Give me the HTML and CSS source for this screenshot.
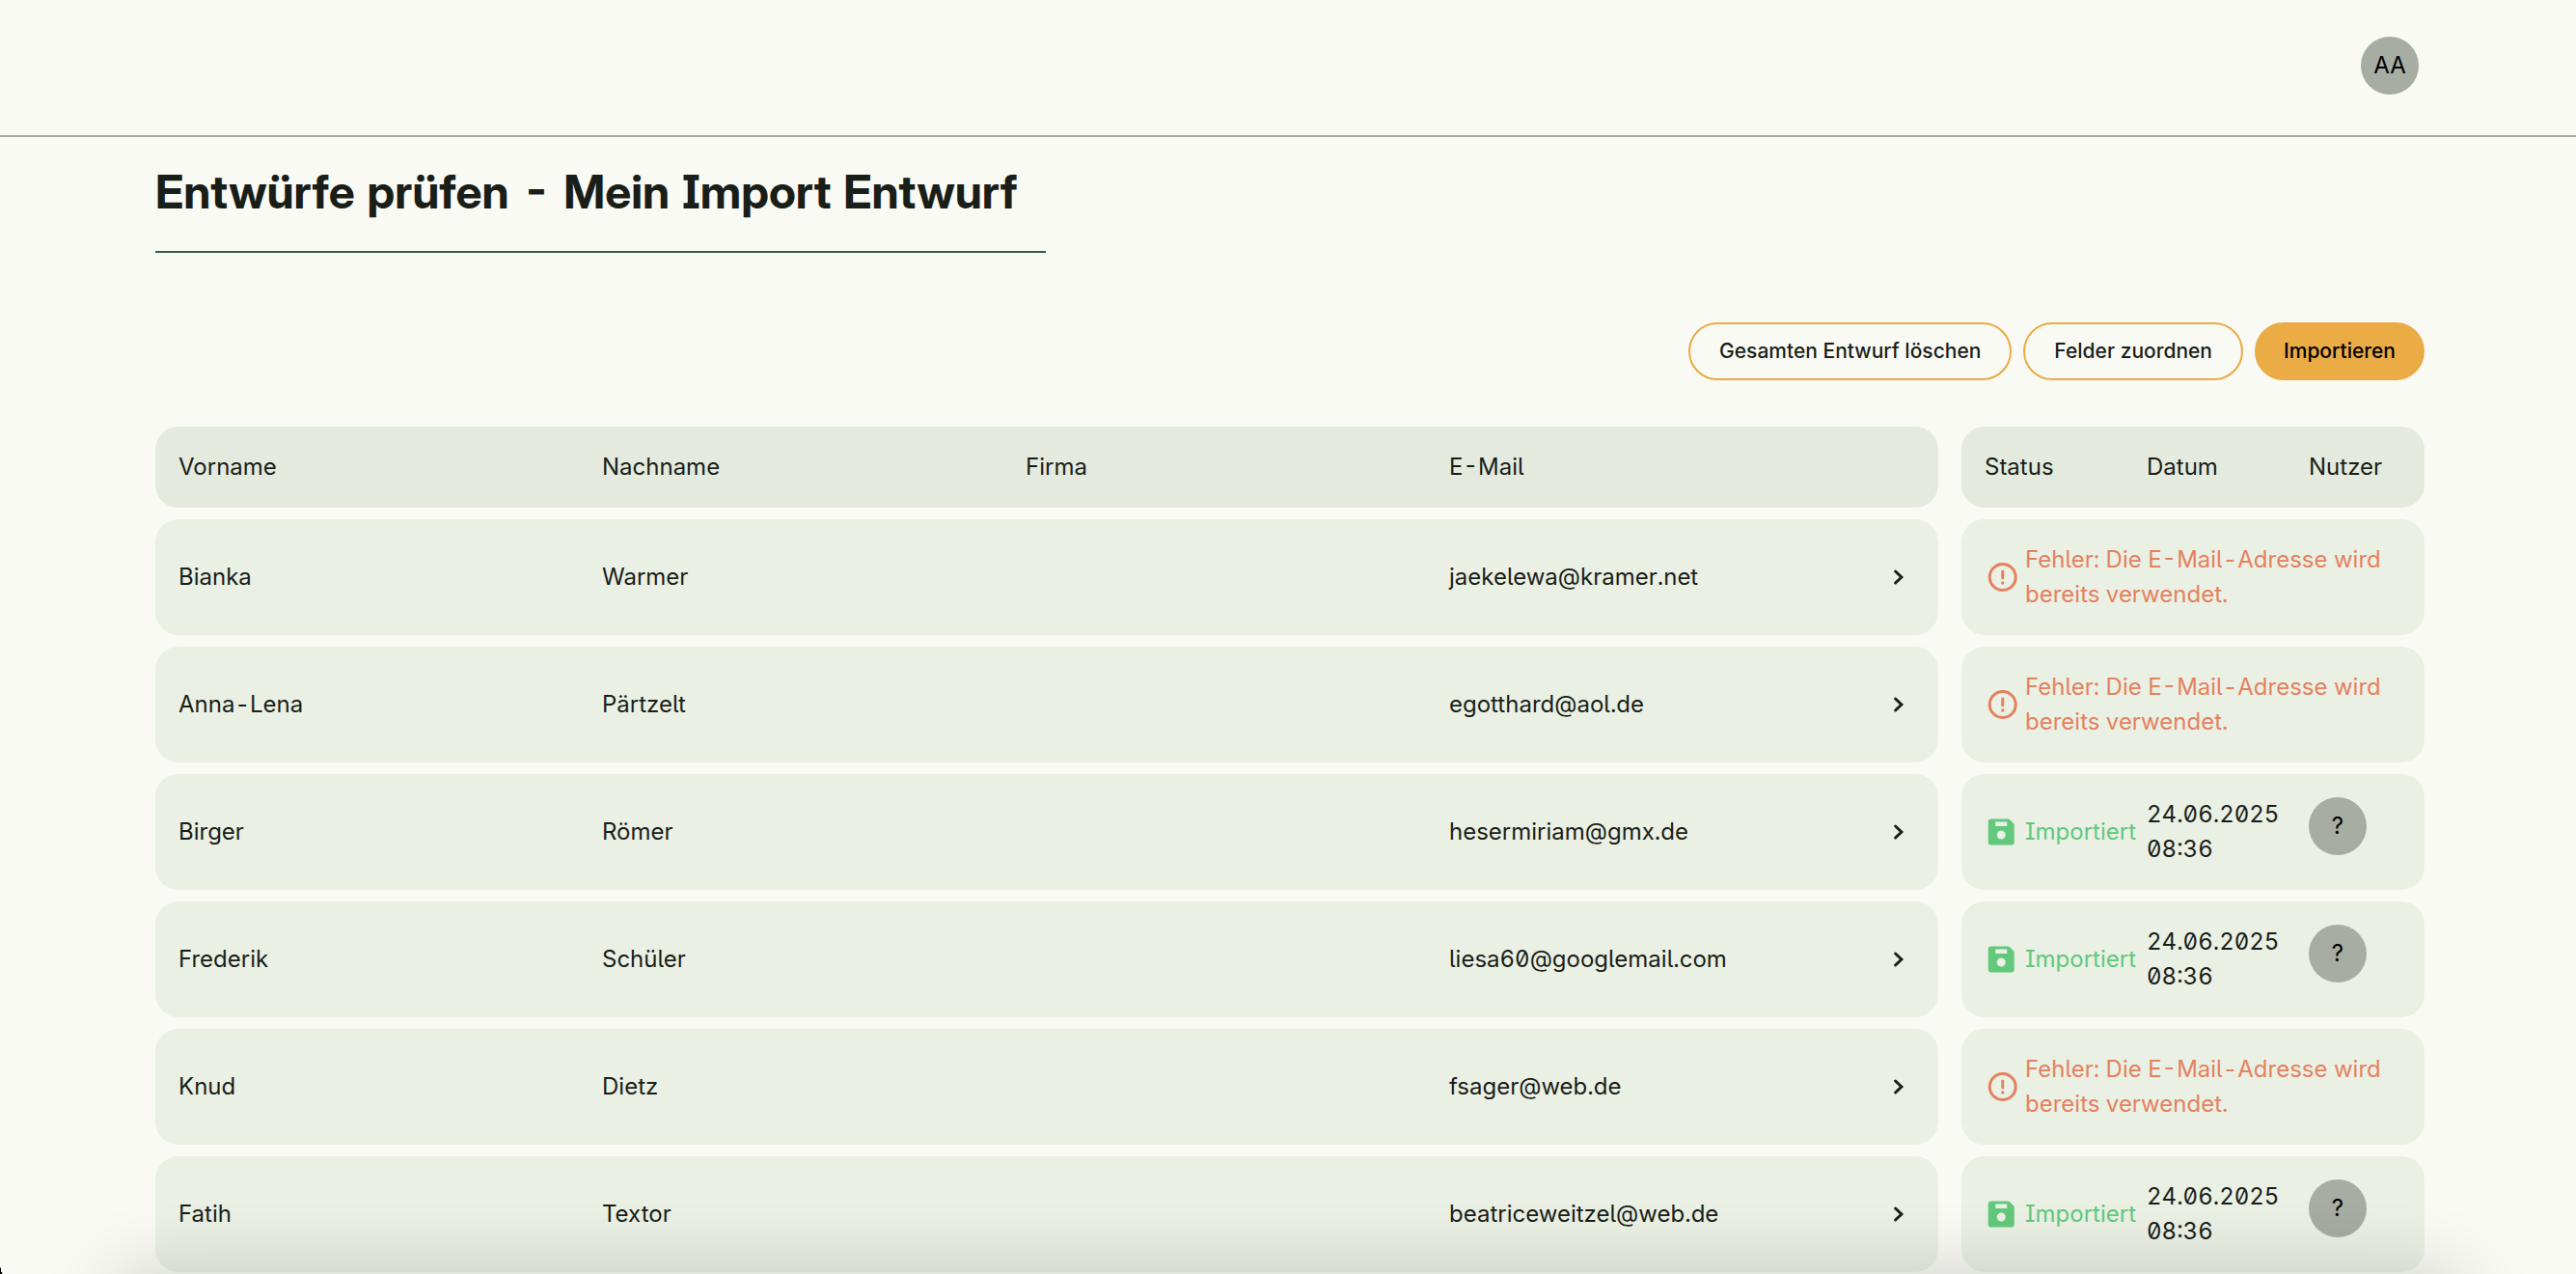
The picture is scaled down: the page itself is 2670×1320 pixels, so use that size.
FILE: index.html
```html
<!DOCTYPE html>
<html lang="de">
<head>
<meta charset="utf-8">
<meta name="viewport" content="width=device-width, initial-scale=1">
<title>Entwürfe prüfen - Mein Import Entwurf</title>
<link rel="stylesheet" href="styles.css">
</head>
<body>
<svg class="sprite" aria-hidden="true">
  <symbol id="chevron" viewBox="0 0 24 24"><path d="M10.400 8l4.200 4-4.200 4" fill="none" stroke="currentColor" stroke-width="2" stroke-linecap="round"/></symbol>
  <symbol id="alert" viewBox="0 0 24 24"><circle cx="12.500" cy="12" r="9" fill="none" stroke="currentColor" stroke-width="2"/><path d="M12.500 8v4.500" fill="none" stroke="currentColor" stroke-width="2" stroke-linecap="round"/><circle cx="12.500" cy="16" r="1.100" fill="currentColor"/></symbol>
  <symbol id="save" viewBox="0 0 24 24"><path transform="translate(-.5 0)" fill="currentColor" fill-rule="evenodd" d="M5 3h11.600a2 2 0 0 1 1.400.6l2.400 2.400a2 2 0 0 1 .6 1.400V19a2 2 0 0 1-2 2H5a2 2 0 0 1-2-2V5a2 2 0 0 1 2-2ZM8 5v3h8V5ZM12 11a3 3 0 1 0 0 6 3 3 0 0 0 0-6Z"/></symbol>
</svg>
<header class="topbar"><button class="avatar" type="button">AA</button></header>
<main class="page">
  <h1 class="title">Entwürfe prüfen - Mein Import Entwurf</h1>
  <div class="actions">
    <button class="btn" type="button">Gesamten Entwurf löschen</button>
    <button class="btn" type="button">Felder zuordnen</button>
    <button class="btn btn-primary" type="button">Importieren</button>
  </div>
  <table class="drafts">
    <thead>
      <tr class="row row-head"><th>Vorname</th><th>Nachname</th><th>Firma</th><th>E-Mail</th><th class="open"></th><th class="status">Status</th><th class="date">Datum</th><th class="user">Nutzer</th></tr>
    </thead>
    <tbody>
      <tr class="row"><td>Bianka</td><td>Warmer</td><td></td><td>jaekelewa@kramer.net</td><td class="open"><svg class="icon"><use href="#chevron"/></svg></td><td class="status error" colspan="3"><div class="state"><svg class="icon"><use href="#alert"/></svg><span>Fehler: Die E-Mail-Adresse wird bereits verwendet.</span></div></td></tr>
      <tr class="row"><td>Anna-Lena</td><td>Pärtzelt</td><td></td><td>egotthard@aol.de</td><td class="open"><svg class="icon"><use href="#chevron"/></svg></td><td class="status error" colspan="3"><div class="state"><svg class="icon"><use href="#alert"/></svg><span>Fehler: Die E-Mail-Adresse wird bereits verwendet.</span></div></td></tr>
      <tr class="row"><td>Birger</td><td>Römer</td><td></td><td>hesermiriam@gmx.de</td><td class="open"><svg class="icon"><use href="#chevron"/></svg></td><td class="status done"><div class="state"><svg class="icon"><use href="#save"/></svg><span>Importiert</span></div></td><td class="date">24.06.2025<br>08:36</td><td class="user"><span class="avatar">?</span></td></tr>
      <tr class="row"><td>Frederik</td><td>Schüler</td><td></td><td>liesa60@googlemail.com</td><td class="open"><svg class="icon"><use href="#chevron"/></svg></td><td class="status done"><div class="state"><svg class="icon"><use href="#save"/></svg><span>Importiert</span></div></td><td class="date">24.06.2025<br>08:36</td><td class="user"><span class="avatar">?</span></td></tr>
      <tr class="row"><td>Knud</td><td>Dietz</td><td></td><td>fsager@web.de</td><td class="open"><svg class="icon"><use href="#chevron"/></svg></td><td class="status error" colspan="3"><div class="state"><svg class="icon"><use href="#alert"/></svg><span>Fehler: Die E-Mail-Adresse wird bereits verwendet.</span></div></td></tr>
      <tr class="row"><td>Fatih</td><td>Textor</td><td></td><td>beatriceweitzel@web.de</td><td class="open"><svg class="icon"><use href="#chevron"/></svg></td><td class="status done"><div class="state"><svg class="icon"><use href="#save"/></svg><span>Importiert</span></div></td><td class="date">24.06.2025<br>08:36</td><td class="user"><span class="avatar">?</span></td></tr>
    </tbody>
  </table>
</main>
<div class="bottom-shade"></div>
<div class="corner"></div>
</body>
</html>
```

FILE: styles.css
```css
*, *::before, *::after { box-sizing: border-box; }

body {
  margin: 0;
  background: #f9faf4;
  color: #1a1e19;
  font: 400 24px/36px Inter, "Liberation Sans", sans-serif;
  font-feature-settings: "ss02", "zero", "tnum";
}

.sprite { position: absolute; width: 0; height: 0; }

.topbar {
  display: flex;
  justify-content: flex-end;
  padding: 38px 163px 42px;
  border-bottom: 2px solid #a7ada3;
}

.avatar {
  display: flex;
  align-items: center;
  justify-content: center;
  width: 60px;
  height: 60px;
  padding: 0;
  border: 0;
  border-radius: 50%;
  background: #a7ada3;
  color: #000;
  font: inherit;
  font-feature-settings: inherit;
}

.page { padding: 24px 157px 2px 161px; }

.title {
  width: fit-content;
  margin: 0;
  padding: 0 30px 28px 0;
  border-bottom: 2px solid #2f5d45;
  font-family: "Inter Display", Inter, "Liberation Sans", sans-serif;
  font-size: 48px;
  font-weight: 700;
  line-height: 66px;
}

.actions {
  display: flex;
  justify-content: flex-end;
  gap: 12px;
  margin: 72px 0 48px;
}

.btn {
  height: 60px;
  padding: 0 30px;
  border: 2px solid #ebab45;
  border-radius: 30px;
  background: transparent;
  color: #1a1e19;
  font: 500 21px/36px Inter, "Liberation Sans", sans-serif;
}

.btn-primary { padding: 0 28px; background: #ebab45; color: #000; }

.drafts { display: block; }

.drafts thead, .drafts tbody {
  display: flex;
  flex-direction: column;
  gap: 12px;
}

.drafts thead { margin-bottom: 12px; }

.row {
  display: grid;
  grid-template-columns: repeat(4, minmax(0, 1fr)) 92px 24px 168px 168px 144px;
  align-items: center;
  min-height: 120px;
}

.row-head { min-height: 84px; }

/* The two panels behind the cells of a row */
.row::before, .row::after {
  content: "";
  grid-row: 1;
  align-self: stretch;
  border-radius: 24px;
  background: #eaf0e4;
}

.row::before { grid-column: 1 / 6; }
.row::after { grid-column: 7 / 10; }
.row-head::before, .row-head::after { background: #e4eade; }

.row th, .row td {
  z-index: 1;
  grid-row: 1;
  padding: 0 0 0 24px;
  font-weight: 400;
  text-align: left;
}

.row > :nth-child(1) { grid-column: 1; }
.row > :nth-child(2) { grid-column: 2; }
.row > :nth-child(3) { grid-column: 3; }
.row > :nth-child(4) { grid-column: 4; }
.row .open { grid-column: 5; justify-self: end; padding: 0 24px 0 0; }
.row .status { grid-column: 7; }
.row .error { grid-column: 7 / 10; padding-right: 24px; color: #e5815f; }
.row .done { color: #62c87b; white-space: nowrap; }
.row .date { grid-column: 8; }
.row .user { grid-column: 9; }
.row td.user { align-self: start; padding-top: 24px; }

.state { display: flex; align-items: center; gap: 6px; }

.icon { display: block; flex: none; width: 36px; height: 36px; }

.bottom-shade {
  position: fixed;
  right: 130px;
  bottom: -40px;
  left: 130px;
  z-index: 2;
  height: 20px;
  box-shadow: 0 0 80px 8px rgba(0, 0, 0, 0.32);
  pointer-events: none;
}

.corner {
  position: fixed;
  bottom: 0;
  left: 0;
  z-index: 3;
  width: 3px;
  height: 14px;
  background: radial-gradient(ellipse at top right, transparent 68%, #000 72%);
}
```
